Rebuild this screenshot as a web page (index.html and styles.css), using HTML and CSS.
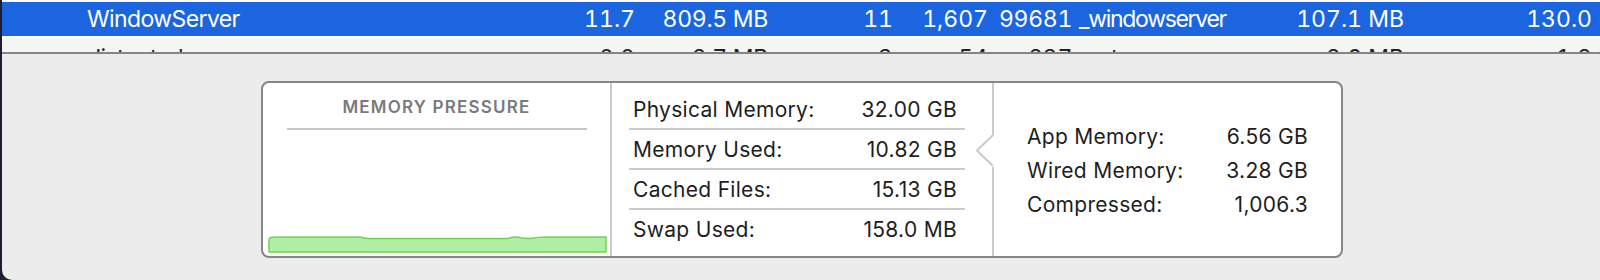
FILE: index.html
```html
<!DOCTYPE html>
<html>
<head>
<meta charset="utf-8">
<link rel="stylesheet" href="styles.css">
</head>
<body>
<div class="window">
  <div class="table">
    <div class="row sel">
      <span class="c name">WindowServer</span>
      <span class="c cpu">11.7</span>
      <span class="c mem">809.5 MB</span>
      <span class="c thr">11</span>
      <span class="c ports">1,607</span>
      <span class="c pid">99681</span>
      <span class="c user">_windowserver</span>
      <span class="c real">107.1 MB</span>
      <span class="c last">130.0 MB</span>
    </div>
    <div class="row alt">
      <span class="c name">distnoted</span>
      <span class="c cpu">0.0</span>
      <span class="c mem">2.7 MB</span>
      <span class="c thr">3</span>
      <span class="c ports">54</span>
      <span class="c pid">237</span>
      <span class="c user">root</span>
      <span class="c real">2.6 MB</span>
      <span class="c last">1.8 MB</span>
    </div>
  </div>
  <div class="pane">
    <div class="card">
      <div class="pressure">
        <div class="ptitle">MEMORY PRESSURE</div>
        <div class="prule"></div>
        <svg class="graph" width="339" height="18" viewBox="0 0 339 18">
          <path d="M1,17 L1,4 Q2,2 8,2 L92,2 Q96,3.5 101,3.5 L240,3.5 Q245,1.8 250,2.2 Q255,3.5 262,3.5 Q270,2 278,2 L338,2 L338,17 Z" fill="#b0eea5" stroke="#6fd64c" stroke-width="1.5"/>
        </svg>
      </div>
      <div class="stats">
        <div class="srow"><span>Physical Memory:</span><span>32.00 GB</span></div>
        <div class="srow"><span>Memory Used:</span><span>10.82 GB</span></div>
        <div class="srow"><span>Cached Files:</span><span>15.13 GB</span></div>
        <div class="srow"><span>Swap Used:</span><span>158.0 MB</span></div>
      </div>
      <div class="breakdown">
        <svg class="notch" width="18" height="32" viewBox="0 0 18 32">
          <rect x="15" y="0" width="3" height="32" fill="#ffffff"/>
          <polyline points="17,0 1,15.5 17,31" fill="#ffffff" stroke="#cacaca" stroke-width="2"/>
        </svg>
        <div class="brow"><span>App Memory:</span><span>6.56 GB</span></div>
        <div class="brow"><span>Wired Memory:</span><span>3.28 GB</span></div>
        <div class="brow"><span>Compressed:</span><span>1,006.3</span></div>
      </div>
    </div>
  </div>
</div>
</body>
</html>
```

FILE: styles.css
```css
* { box-sizing: border-box; }
html, body { margin: 0; padding: 0; }
body {
  background: #1e1f2c;
  width: 1600px;
  height: 280px;
  overflow: hidden;
  font-family: Inter, "Noto Sans", "Liberation Sans", sans-serif;
}
.window {
  margin-left: 2px;
  width: 1598px;
  height: 280px;
  background: #ececec;
  border-bottom-left-radius: 10px;
  overflow: hidden;
}
.table {
  height: 54px;
  background: #ffffff;
  padding-top: 2px;
  border-bottom: 2px solid #858585;
  overflow: hidden;
  display: flex;
  flex-direction: column;
  gap: 2px;
}
.row {
  flex: 0 0 34px;
  height: 34px;
  display: flex;
  align-items: center;
  font-size: 23px;
  line-height: 34px;
  white-space: nowrap;
  overflow: hidden;
  font-variant-numeric: tabular-nums;
}
.row.sel { background: #1b66e0; color: #ffffff; }
.row.alt { background: #f4f5f4; color: #222222; padding-top: 6px; }
.c { flex: 0 0 auto; display: block; }
.name { width: 540px; padding-left: 85px; letter-spacing: -0.6px; }
.cpu { width: 93px; text-align: right; }
.mem { width: 133px; text-align: right; letter-spacing: -0.3px; }
.thr { width: 125px; text-align: right; }
.ports { width: 95px; text-align: right; }
.pid { width: 84px; text-align: right; letter-spacing: -0.3px; }
.user { width: 206px; padding-left: 7px; letter-spacing: -1.3px; }
.real { width: 126px; text-align: right; }
.last { width: 230px; text-align: right; }

.pane {
  padding: 27px 0 0 259px;
}
.card {
  width: 1082px;
  height: 177px;
  background: #ffffff;
  border: 2px solid #868686;
  border-radius: 8px;
  display: flex;
}
.pressure {
  width: 347px;
  display: flex;
  flex-direction: column;
  align-items: center;
  padding-top: 14px;
}
.ptitle {
  font-size: 17px;
  line-height: 21px;
  font-weight: 600;
  letter-spacing: 1.2px;
  color: #7a7a7a;
}
.prule {
  margin-top: 10px;
  width: 300px;
  height: 2px;
  background: #c6c6c6;
  margin-left: 1px;
}
.graph {
  margin-top: auto;
  margin-bottom: 3px;
  margin-left: 1px;
  display: block;
}
.stats {
  width: 382px;
  border-left: 2px solid #cacaca;
  padding: 7px 27px 0 17px;
  color: #1e1e1e;
  font-size: 21px;
}
.srow {
  height: 40px;
  line-height: 36px;
  padding: 2px 8px 0 4px;
  border-bottom: 2px solid #cbcbcb;
  display: flex;
  justify-content: space-between;
  letter-spacing: 0.3px;
}
.srow:last-child { border-bottom: none; }
.breakdown {
  position: relative;
  flex: 1;
  border-left: 2px solid #cacaca;
  display: flex;
  flex-direction: column;
  justify-content: center;
  padding: 3px 33px 0 33px;
  color: #1e1e1e;
  font-size: 21px;
}
.notch {
  position: absolute;
  left: -18px;
  top: 52px;
}
.brow {
  height: 34px;
  line-height: 34px;
  display: flex;
  justify-content: space-between;
  letter-spacing: 0.3px;
}
```
